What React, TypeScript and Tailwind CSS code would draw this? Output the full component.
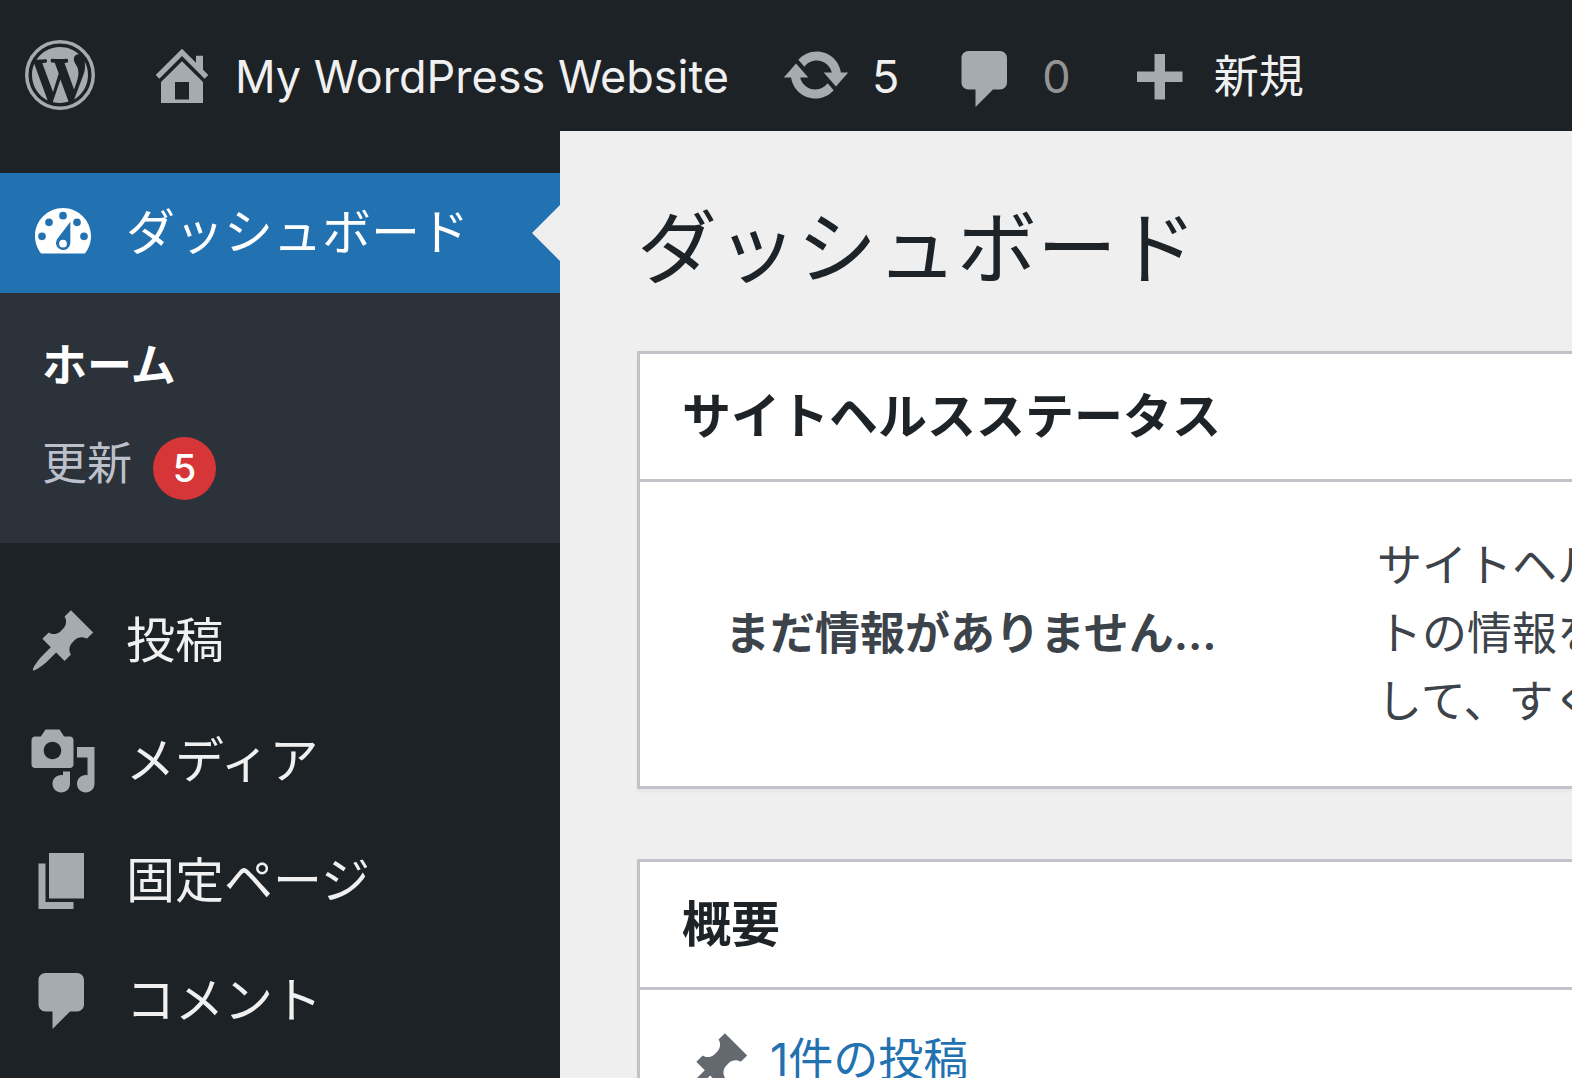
import type { ReactNode } from "react";

const ICONS = {
  home: "M16 8.5l1.53 1.53-1.06 1.06L10 4.6l-6.47 6.49-1.06-1.06L10 2.5l4 4v-2h2v4zm-6-2.46l6 5.99V18H4v-5.97zM12 17v-5H8v5h4z",
  update:
    "M10.2 3.28c3.53 0 6.43 2.61 6.92 6h2.08l-3.5 4-3.5-4h2.32c-.45-1.97-2.21-3.45-4.32-3.45-1.45 0-2.73.71-3.54 1.78L4.95 5.66C6.23 4.2 8.11 3.28 10.2 3.28zm-.4 13.44c-3.52 0-6.43-2.61-6.92-6H.8l3.5-4 3.5 4H5.48c.45 1.97 2.21 3.45 4.32 3.45 1.45 0 2.73-.71 3.54-1.78l1.71 1.95c-1.28 1.46-3.15 2.38-5.25 2.38z",
  comment: "M5 2h9c1.1 0 2 .9 2 2v7c0 1.1-.9 2-2 2h-2l-5 5v-5H5c-1.1 0-2-.9-2-2V4c0-1.1.9-2 2-2z",
  plus: "M17 9v3h-5v5H9v-5H4V9h5V4h3v5h5z",
  dashboard:
    "M3.76 17h12.48C17.34 15.63 18 13.9 18 12c0-4.41-3.58-8-8-8s-8 3.59-8 8c0 1.9.66 3.63 1.76 5zM10 5.1a1.1 1.1 0 1 1 0 2.2 1.1 1.1 0 0 1 0-2.2zM6 7a1.1 1.1 0 1 1 0 2.2A1.1 1.1 0 0 1 6 7zM14 7a1.1 1.1 0 1 1 0 2.2A1.1 1.1 0 0 1 14 7zM4 13.2A1.1 1.1 0 1 1 4 11a1.1 1.1 0 0 1 0 2.2zM16 13.2a1.1 1.1 0 1 1 0-2.2 1.1 1.1 0 0 1 0 2.2zM12.1 7.9v6.2a2.05 2.05 0 1 1-3.85-1.1zM10 13.1a1.1 1.1 0 1 0 0 2.2 1.1 1.1 0 0 0 0-2.2z",
  pin: "M10.44 3.02l1.82-1.82 6.36 6.35-1.83 1.82c-1.05-.68-2.48-.57-3.41.36l-.75.75c-.92.93-1.04 2.35-.35 3.41l-1.83 1.82-2.41-2.41-2.8 2.79c-.42.42-3.38 2.71-3.8 2.29s1.86-3.39 2.28-3.81l2.79-2.79L4.1 9.36l1.83-1.82c1.05.69 2.48.57 3.4-.36l.75-.75c.93-.92 1.05-2.35.36-3.41z",
  media:
    "M13 11V4c0-.55-.45-1-1-1h-1.67L9 1H5L3.67 3H2c-.55 0-1 .45-1 1v7c0 .55.45 1 1 1h10c.55 0 1-.45 1-1zM7 4.5c1.38 0 2.5 1.12 2.5 2.5S8.38 9.5 7 9.5 4.5 8.38 4.5 7 5.62 4.5 7 4.5zM14 6h5v10.5c0 1.38-1.12 2.5-2.5 2.5S14 17.88 14 16.5s1.12-2.5 2.5-2.5c.17 0 .34.02.5.05V9h-3V6zm-4 8.05V13h2v3.5c0 1.38-1.12 2.5-2.5 2.5S7 17.88 7 16.5 8.12 14 9.5 14c.17 0 .34.02.5.05z",
  page: "M6 15V2h10v13H6zm-1 1h8v2H3V5h2v11z",
};

type IconName = keyof typeof ICONS;

const MENU: { label: string; icon: IconName }[] = [
  { label: "投稿", icon: "pin" },
  { label: "メディア", icon: "media" },
  { label: "固定ページ", icon: "page" },
  { label: "コメント", icon: "comment" },
];

function Icon({ name, className = "" }: { name: IconName; className?: string }) {
  return (
    <svg viewBox="0 0 20 20" fill="currentColor" fillRule="evenodd" aria-hidden="true" className={`size-[70px] shrink-0 ${className}`}>
      <path d={ICONS[name]} />
    </svg>
  );
}

function WordPressLogo() {
  return (
    <svg viewBox="0 0 20 20" fill="currentColor" aria-hidden="true" className="size-[70px] shrink-0">
      <circle cx="10" cy="10" r="9.5" fill="none" stroke="currentColor" />
      <g transform="translate(1 1) scale(.9)">
        <path d="M7.78 15.37L4.37 6.22c.55-.02 1.17-.08 1.17-.08.5-.06.44-1.13-.06-1.11 0 0-1.45.11-2.37.11-.18 0-.37 0-.58-.01C4.12 2.69 6.87 1.11 10 1.11c2.33 0 4.45.87 6.05 2.34-.68-.11-1.65.39-1.65 1.58 0 .74.45 1.36.9 2.1.35.61.55 1.36.55 2.46 0 1.49-1.4 5-1.4 5l-3.03-8.37c.54-.02.82-.17.82-.17.5-.05.44-1.25-.06-1.22 0 0-1.44.12-2.38.12-.87 0-2.33-.12-2.33-.12-.5-.03-.56 1.2-.06 1.22l.92.08 1.26 3.41z" />
        <path d="M17.41 10c.24-.64.74-1.87.43-4.25.7 1.29 1.05 2.71 1.05 4.25 0 3.29-1.73 6.24-4.4 7.78.97-2.59 1.94-5.2 2.92-7.78z" />
        <path d="M6.1 18.09C3.12 16.65 1.11 13.53 1.11 10c0-1.3.23-2.48.72-3.59C3.25 10.3 4.67 14.2 6.1 18.09z" />
        <path d="M10.13 11.46l2.58 6.98c-.86.29-1.76.45-2.71.45-.79 0-1.57-.11-2.29-.33.81-2.38 1.62-4.74 2.42-7.1z" />
      </g>
    </svg>
  );
}

function AdminBar() {
  return (
    <header className="flex h-[131px] shrink-0 items-center gap-[52px] overflow-hidden pt-[19px] pl-[25px] whitespace-nowrap text-[#a6aab1]">
      <a href="#wordpress" aria-label="WordPress">
        <WordPressLogo />
      </a>
      <a href="#site" className="flex items-center gap-[18px]">
        <Icon name="home" />
        <span className="mt-1 text-[#f0f0f1]">My WordPress Website</span>
      </a>
      <a href="#updates" className="flex items-center gap-[21px]">
        <Icon name="update" />
        <span className="mt-1 text-[#f0f0f1]">5</span>
      </a>
      <a href="#comments" className="flex items-center gap-[21px]">
        <Icon name="comment" className="mt-2" />
        <span className="mt-1 text-[#949494]">0</span>
      </a>
      <a href="#new" className="flex items-center gap-[21px]">
        <Icon name="plus" />
        <span className="mt-1 text-[#f0f0f1]">新規</span>
      </a>
    </header>
  );
}

function Sidebar() {
  return (
    <nav className="w-[560px] shrink-0 pt-[42px] text-[49px] text-[#f0f0f1]">
      <a href="#dashboard" className="relative flex h-[120px] items-center gap-7 bg-[#2271b1] pl-7 text-white">
        <Icon name="dashboard" className="-mt-2" />
        ダッシュボード
        <svg viewBox="0 0 28 56" aria-hidden="true" className="absolute top-8 right-0 h-14 w-7 fill-[#efeff0]">
          <path d="M28 0v56L0 28z" />
        </svg>
      </a>
      <ul className="h-[250px] bg-[#2c3239] pt-6 pl-[42px] text-[45px]">
        <li>
          <a href="#home" className="flex h-[98px] items-center font-semibold text-white">
            ホーム
          </a>
        </li>
        <li>
          <a href="#updates" className="flex h-[98px] items-center gap-[21px] text-[#bcc0cb]">
            更新
            <span className="mt-2 flex size-[63px] items-center justify-center rounded-full bg-[#d63638] text-[38px] font-medium text-white">
              5
            </span>
          </a>
        </li>
      </ul>
      <ul className="pt-[38px]">
        {MENU.map((item) => (
          <li key={item.label}>
            <a href={`#${item.icon}`} className="flex h-[120px] items-center gap-7 pl-7">
              <Icon name={item.icon} className="text-[#a6aab1]" />
              {item.label}
            </a>
          </li>
        ))}
      </ul>
    </nav>
  );
}

function Postbox({ title, children }: { title: string; children: ReactNode }) {
  return (
    <section className="border-3 border-r-0 border-[#c2c3c8] bg-white shadow-[0_3px_3px_rgba(0,0,0,0.04)]">
      <h2 className="flex h-32 items-center border-b-3 border-[#c2c3c8] pl-[42px] text-[49px] font-semibold text-[#1d2327]">
        {title}
      </h2>
      {children}
    </section>
  );
}

export default function App() {
  return (
    <div className="flex h-screen flex-col overflow-hidden bg-[#1d2226] font-['Inter','Noto_Sans_CJK_JP',sans-serif] text-[45px] leading-[68px]">
      <AdminBar />
      <div className="flex flex-1">
        <Sidebar />
        <main className="min-w-0 flex-1 overflow-hidden bg-[#efeff0] pt-[63px] pl-[77px] text-[#3c434a]">
          <h1 className="mb-[49px] text-[80px] leading-[108px] whitespace-nowrap text-[#1d2327]">ダッシュボード</h1>
          <div className="flex flex-col gap-[70px]">
            <Postbox title="サイトヘルスステータス">
              <div className="flex h-[304px] items-center overflow-hidden pl-[85px] whitespace-nowrap">
                <p className="w-[652px] shrink-0 font-semibold">まだ情報がありません...</p>
                <p>
                  サイトヘル
                  <br />
                  トの情報を
                  <br />
                  して、すぐ
                </p>
              </div>
            </Postbox>
            <Postbox title="概要">
              <a href="#posts" className="flex items-center gap-[18px] pt-[31px] pl-[42px] text-[#2271b1]">
                <Icon name="pin" className="mt-2 text-[#646970]" />
                1件の投稿
              </a>
            </Postbox>
          </div>
        </main>
      </div>
    </div>
  );
}
